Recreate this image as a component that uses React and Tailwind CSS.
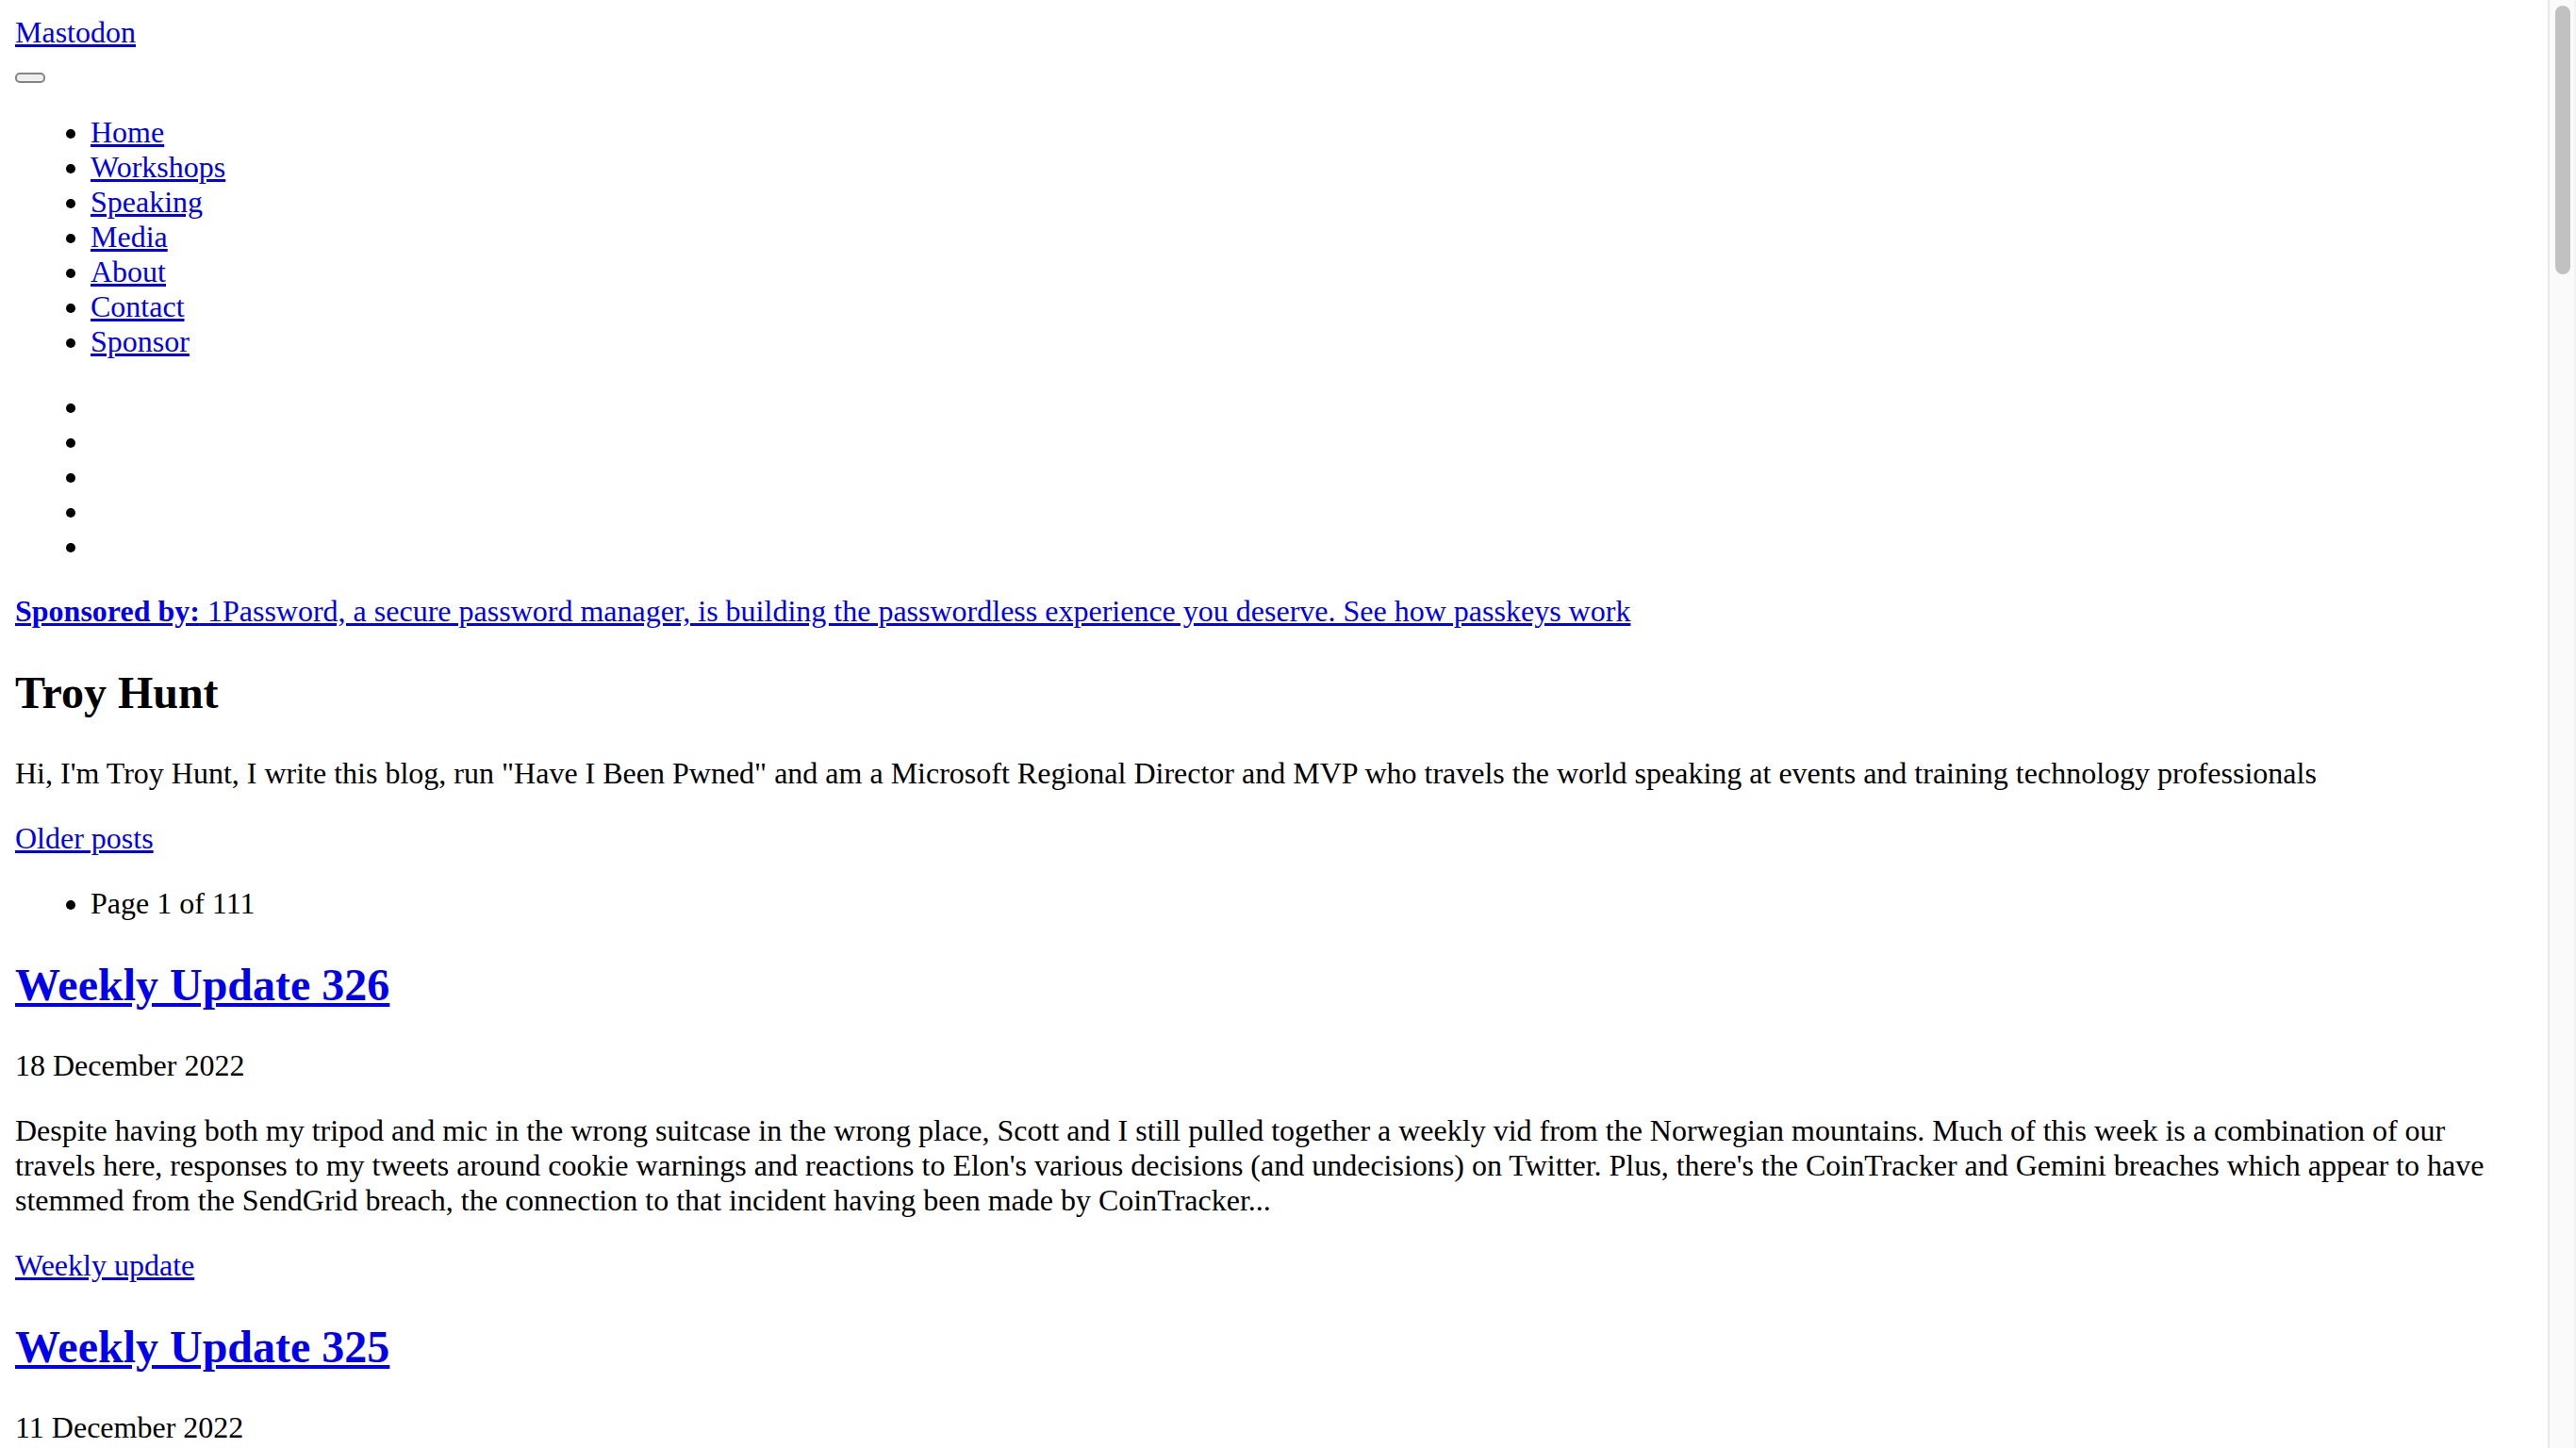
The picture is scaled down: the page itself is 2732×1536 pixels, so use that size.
const navLinks = ["Home", "Workshops", "Speaking", "Media", "About", "Contact", "Sponsor"];

const link = "text-[#0000ee] underline";

const App = () => {
  return (
    <div className="flex h-[1536px] overflow-hidden bg-white text-black text-[32px] leading-[normal] font-['Liberation_Serif','Times_New_Roman',serif]">
      <div className="flex-1 min-w-0 p-4">
        <div>
          <a href="#" className={link}>
            Mastodon
          </a>
        </div>
        <div className="h-[37px] pt-[24px]">
          <button
            type="button"
            aria-label="menu"
            className="block w-[32px] h-[11px] rounded-[5px] border-2 border-[#858585] bg-[#efefef]"
          />
        </div>

        <ul className="mt-8 pl-[80px] list-disc">
          {navLinks.map((item) => (
            <li key={item}>
              <a href="#" className={link}>
                {item}
              </a>
            </li>
          ))}
        </ul>

        <ul className="mt-8 pl-[80px] list-disc">
          {[0, 1, 2, 3, 4].map((i) => (
            <li key={i}>{"\u00a0"}</li>
          ))}
        </ul>

        <div className="mt-8">
          <a href="#" className={link}>
            <strong className="font-bold">Sponsored by:</strong> 1Password, a secure password manager, is
            building the passwordless experience you deserve. See how passkeys work
          </a>
        </div>

        <section>
          <h1 className="mt-[40px] text-[48px] font-bold">Troy Hunt</h1>
          <p className="mt-[40px]">
            Hi, I'm Troy Hunt, I write this blog, run "Have I Been Pwned" and am a Microsoft Regional
            Director and MVP who travels the world speaking at events and training technology
            professionals
          </p>
        </section>

        <p className="mt-8">
          <a href="#" className={link}>
            Older posts
          </a>
        </p>
        <ul className="mt-8 pl-[80px] list-disc">
          <li>Page 1 of 111</li>
        </ul>

        <article>
          <h2 className="mt-[40px] text-[48px] font-bold">
            <a href="#" className={link}>
              Weekly Update 326
            </a>
          </h2>
          <p className="mt-[40px]">18 December 2022</p>
          <p className="mt-8">
            Despite having both my tripod and mic in the wrong suitcase in the wrong place, Scott and I
            still pulled together a weekly vid from the Norwegian mountains. Much of this week is a
            combination of our travels here, responses to my tweets around cookie warnings and
            reactions to Elon's various decisions (and undecisions) on Twitter. Plus, there's the
            CoinTracker and Gemini breaches which appear to have stemmed from the SendGrid breach, the
            connection to that incident having been made by CoinTracker...
          </p>
          <p className="mt-8">
            <a href="#" className={link}>
              Weekly update
            </a>
          </p>
        </article>

        <article>
          <h2 className="mt-[40px] text-[48px] font-bold">
            <a href="#" className={link}>
              Weekly Update 325
            </a>
          </h2>
          <p className="mt-[40px]">11 December 2022</p>
        </article>
      </div>

      <div className="w-[30px] shrink-0 border-l-2 border-r-2 border-l-[#e8e8e8] border-r-[#f2f2f2] bg-[#fafafa]">
        <div className="mt-[6px] ml-[6px] w-[16px] h-[285px] rounded-full bg-[#c1c1c1]" />
      </div>
    </div>
  );
};

export default App;
